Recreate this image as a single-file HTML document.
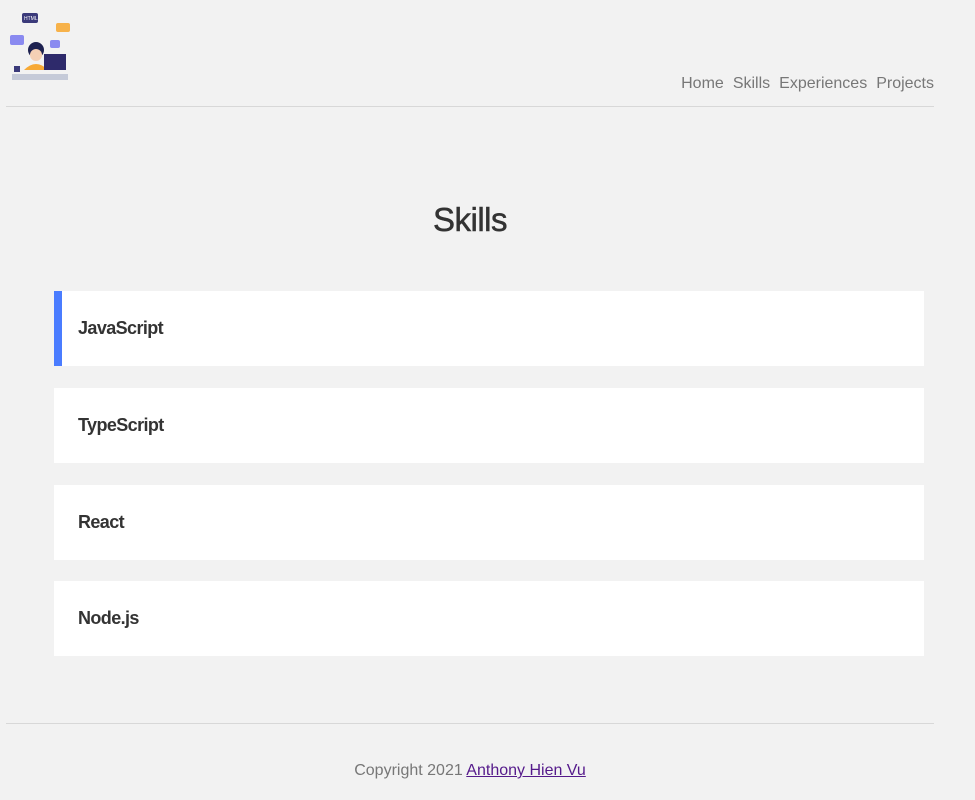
<!DOCTYPE html>
<html><head><meta charset="utf-8"><style>
body{margin:0;background:#f2f2f2;font-family:"Liberation Sans",sans-serif;width:975px;height:800px;position:relative;overflow:hidden}
.hr{position:absolute;left:6px;width:928px;height:1px;background:#d8d8d8}
nav{position:absolute;right:41px;top:75px;font-size:16px;color:#777}
nav span{margin-left:9px}
h1{position:absolute;top:201px;left:0;width:940px;text-align:center;margin:0;font-size:33px;font-weight:normal;color:#333;letter-spacing:-0.5px;-webkit-text-stroke:0.5px #333}
.card{position:absolute;left:54px;width:870px;height:75px;background:#fff;box-sizing:border-box;padding-left:24px;line-height:75px;font-size:18px;color:#333;font-weight:bold;letter-spacing:-0.6px}
.card.a{border-left:8px solid #4a7cff;padding-left:16px}
.foot{position:absolute;top:762px;left:0;width:940px;text-align:center;font-size:16px;color:#777}
.foot a{color:#551a8b;text-decoration:underline}
</style></head><body>
<svg style="position:absolute;left:8px;top:10px" width="64" height="76" viewBox="0 0 64 76">
<rect x="14" y="3" width="16" height="10" rx="2" fill="#3b3a7a"/><text x="16" y="10" font-size="5" fill="#fff" font-family="Liberation Sans">HTML</text>
<rect x="48" y="13" width="14" height="9" rx="2" fill="#f7b24a"/>
<rect x="2" y="25" width="14" height="10" rx="2" fill="#8a8af0"/>
<rect x="42" y="30" width="10" height="8" rx="2" fill="#8a8af0"/>
<circle cx="28" cy="40" r="8" fill="#1d2150"/>
<circle cx="28" cy="45" r="6" fill="#f5d0b5"/>
<path d="M16 60 Q28 48 40 60 Z" fill="#f7a935"/>
<rect x="36" y="44" width="22" height="16" fill="#2e2a6b"/>
<rect x="6" y="56" width="6" height="6" fill="#3b3a7a"/>
<rect x="4" y="64" width="56" height="6" fill="#c5cad8"/>
</svg>
<nav><span>Home</span><span>Skills</span><span>Experiences</span><span>Projects</span></nav>
<div class="hr" style="top:106px"></div>
<h1>Skills</h1>
<div class="card a" style="top:291px">JavaScript</div>
<div class="card" style="top:388px">TypeScript</div>
<div class="card" style="top:485px">React</div>
<div class="card" style="top:581px">Node.js</div>
<div class="hr" style="top:723px"></div>
<div class="foot">Copyright 2021 <a>Anthony Hien Vu</a></div>
</body></html>
